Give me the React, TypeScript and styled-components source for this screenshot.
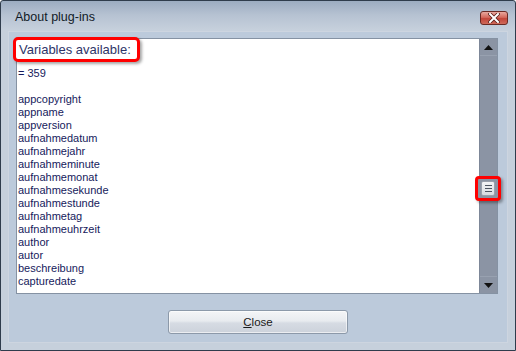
import React from 'react';
import styled, { createGlobalStyle } from 'styled-components';

const GlobalStyle = createGlobalStyle`
	html, body {
		margin: 0;
		padding: 0;
		background: #ffffff;
	}
	body {
		font-family: 'Liberation Sans', Arial, sans-serif;
	}
`;

const Window = styled.div`
	box-sizing: border-box;
	width: 516px;
	height: 351px;
	display: flex;
	flex-direction: column;
	border: 1px solid #2f3c4c;
	border-radius: 3px 3px 0 0;
	background: linear-gradient(to bottom, #9cacc1 0px, #b6c2d2 14px, #c6d0dc 29px, #c6d0dc 100%);
`;

const TitleBar = styled.div`
	height: 28px;
	display: flex;
	align-items: center;
	justify-content: space-between;
	padding: 0 7px 2px 14px;
	flex-shrink: 0;
`;

const Title = styled.span`
	font-size: 12.5px;
	color: #111a26;
	margin-top: 4px;
`;

const CloseX = styled.div`
	box-sizing: border-box;
	width: 28px;
	height: 14px;
	margin-top: 5px;
	border: 1px solid #6a2a24;
	border-radius: 3px;
	background: linear-gradient(to bottom, #e9a99f 0%, #d4695c 45%, #c2463a 55%, #cf6a5a 100%);
	display: flex;
	align-items: center;
	justify-content: center;
`;

const Panel = styled.div`
	flex: 1;
	margin: 0 7px 7px 7px;
	border: 1px solid #cdd5e0;
	background: #bccadb;
	display: flex;
	flex-direction: column;
	padding: 6px 9px 0 7px;
`;

const ListFrame = styled.div`
	box-sizing: border-box;
	height: 256px;
	display: flex;
	border: 1px solid #8592a3;
	background: #ffffff;
`;

const ListBody = styled.div`
	flex: 1;
	padding: 0 0 0 1px;
	position: relative;
`;

const Highlight = styled.div<{ $radius?: number }>`
	box-sizing: border-box;
	border: 3px solid #ff0000;
	border-radius: ${(p) => p.$radius ?? 5}px;
	box-shadow: 2px 2px 3px rgba(0, 0, 0, 0.35);
`;

const HeaderBox = styled(Highlight)`
	display: inline-block;
	margin: -2px 0 0 -5px;
	height: 25px;
	padding: 0 6px 0 3px;
	background: #ffffff;
	position: relative;
`;

const HeaderText = styled.span`
	font-size: 13px;
	line-height: 19px;
	color: #2e3468;
`;

const Items = styled.div`
	margin-top: 5px;
	font-size: 11px;
	line-height: 13px;
	color: #161a5c;
`;

const Item = styled.div`
	height: 13px;
	white-space: nowrap;
`;

const ScrollBar = styled.div`
	width: 17px;
	display: flex;
	flex-direction: column;
	position: relative;
	background: #8b94a4;
	border-left: 1px solid #7d8798;
`;

const ArrowButton = styled.div<{ $down?: boolean }>`
	height: 16px;
	display: flex;
	align-items: center;
	justify-content: center;
	border-${(p) => (p.$down ? 'top' : 'bottom')}: 1px solid #98a1b0;
`;

const Track = styled.div`
	flex: 1;
`;

const ThumbBox = styled(Highlight)`
	position: absolute;
	left: -5px;
	top: 137px;
	width: 26px;
	height: 25px;
	display: flex;
	align-items: center;
	justify-content: center;
	background: #8b94a4;
`;

const Thumb = styled.div`
	box-sizing: border-box;
	width: 14px;
	height: 15px;
	border: 1px solid #9aa1ad;
	border-radius: 2px;
	background: linear-gradient(to bottom, #f3f4f6, #d8dce2);
	display: flex;
	flex-direction: column;
	justify-content: center;
	align-items: center;
	gap: 2px;
`;

const ThumbLine = styled.div`
	width: 7px;
	height: 1px;
	background: #4d5562;
`;

const Footer = styled.div`
	flex: 1;
	display: flex;
	justify-content: center;
	padding-top: 16px;
	padding-left: 2px;
`;

const Button = styled.button`
	box-sizing: border-box;
	width: 180px;
	height: 24px;
	border: 1px solid #8c99a9;
	border-radius: 3px;
	background: linear-gradient(to bottom, #f4f5f7 0%, #e8ebef 45%, #d6dbe3 55%, #ccd2db 100%);
	box-shadow: inset 0 0 0 1px rgba(255, 255, 255, 0.6);
	font-family: 'Liberation Sans', Arial, sans-serif;
	font-size: 11.5px;
	color: #1a1a1a;
	padding: 0;
	u {
		text-decoration: underline;
	}
`;

const items = [
	'appcopyright',
	'appname',
	'appversion',
	'aufnahmedatum',
	'aufnahmejahr',
	'aufnahmeminute',
	'aufnahmemonat',
	'aufnahmesekunde',
	'aufnahmestunde',
	'aufnahmetag',
	'aufnahmeuhrzeit',
	'author',
	'autor',
	'beschreibung',
	'capturedate',
];

const App = () => {
	return (
		<>
			<GlobalStyle />
			<Window>
				<TitleBar>
					<Title>About plug-ins</Title>
					<CloseX>
						<svg width='12' height='10' viewBox='0 0 12 10'>
							<path d='M2 1 L10 9 M10 1 L2 9' stroke='#5a1f1a' strokeWidth='3.6' strokeLinecap='square' />
							<path d='M2 1 L10 9 M10 1 L2 9' stroke='#ffffff' strokeWidth='2' strokeLinecap='square' />
						</svg>
					</CloseX>
				</TitleBar>
				<Panel>
					<ListFrame>
						<ListBody>
							<HeaderBox>
								<HeaderText>Variables available:</HeaderText>
							</HeaderBox>
							<Items>
								<Item>= 359</Item>
								<Item />
								{items.map((name) => (
									<Item key={name}>{name}</Item>
								))}
							</Items>
						</ListBody>
						<ScrollBar>
							<ArrowButton>
								<svg width='9' height='5' viewBox='0 0 9 5'>
									<path d='M4.5 0 L9 5 L0 5 Z' fill='#111111' />
								</svg>
							</ArrowButton>
							<Track />
							<ArrowButton $down>
								<svg width='9' height='5' viewBox='0 0 9 5'>
									<path d='M0 0 L9 0 L4.5 5 Z' fill='#111111' />
								</svg>
							</ArrowButton>
							<ThumbBox $radius={4}>
								<Thumb>
									<ThumbLine />
									<ThumbLine />
									<ThumbLine />
								</Thumb>
							</ThumbBox>
						</ScrollBar>
					</ListFrame>
					<Footer>
						<Button>
							<u>C</u>lose
						</Button>
					</Footer>
				</Panel>
			</Window>
		</>
	);
};

export default App;
